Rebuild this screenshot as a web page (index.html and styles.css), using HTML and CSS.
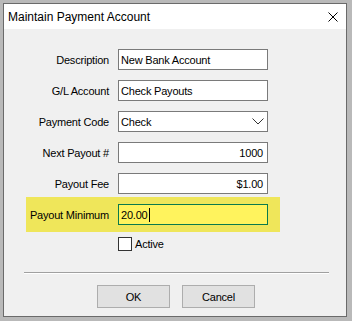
FILE: index.html
```html
<!DOCTYPE html>
<html>
<head>
<meta charset="utf-8">
<link rel="stylesheet" href="styles.css">
</head>
<body>
<div class="window">
  <div class="titlebar">
    <span class="title">Maintain Payment Account</span>
    <svg class="close" width="10" height="10" viewBox="0 0 10 10">
      <path d="M0.5 0.5 L9.5 9.5 M9.5 0.5 L0.5 9.5" stroke="#000" stroke-width="1" fill="none"/>
    </svg>
  </div>
  <div class="body">
    <div class="form">
      <div class="row">
        <label class="lbl">Description</label>
        <div class="field">New Bank Account</div>
      </div>
      <div class="row">
        <label class="lbl">G/L Account</label>
        <div class="field">Check Payouts</div>
      </div>
      <div class="row">
        <label class="lbl">Payment Code</label>
        <div class="field select">
          <span>Check</span>
          <svg class="chev" width="12" height="7" viewBox="0 0 12 7">
            <path d="M0.5 0.5 L6 6 L11.5 0.5" stroke="#333" stroke-width="1" fill="none"/>
          </svg>
        </div>
      </div>
      <div class="row">
        <label class="lbl">Next Payout #</label>
        <div class="field num">1000</div>
      </div>
      <div class="row">
        <label class="lbl">Payout Fee</label>
        <div class="field num">$1.00</div>
      </div>
      <div class="row hl">
        <label class="lbl">Payout Minimum</label>
        <div class="field focus">20.00<span class="caret"></span></div>
      </div>
      <div class="check-row">
        <span class="box"></span>
        <span class="check-label">Active</span>
      </div>
    </div>
    <div class="sep"></div>
    <div class="buttons">
      <button class="btn">OK</button>
      <button class="btn">Cancel</button>
    </div>
  </div>
</div>
</body>
</html>
```
FILE: styles.css
```css
* { box-sizing: border-box; }
html, body { margin: 0; padding: 0; }
body {
  width: 352px;
  height: 321px;
  background: #b9b9b9;
  padding: 3px 0 0 3px;
  font-family: "Liberation Sans", Arial, sans-serif;
  font-size: 11px;
  color: #000;
  overflow: hidden;
}
.window {
  width: 344px;
  height: 314px;
  border: 1px solid #6a6a6a;
  background: #f0f0f0;
  display: flex;
  flex-direction: column;
}
.titlebar {
  height: 25px;
  background: #fff;
  display: flex;
  align-items: center;
  justify-content: space-between;
  padding: 0 8px 0 4px;
}
.title {
  font-size: 12px;
  padding-top: 1px;
}
.close { display: block; margin-top: 1px; }
.body {
  flex: 1;
  padding-top: 20px;
}
.form {
  display: flex;
  flex-direction: column;
  gap: 10px;
}
.row {
  display: grid;
  grid-template-columns: 105px 150px;
  column-gap: 9px;
  align-items: center;
}
.lbl {
  text-align: right;
  letter-spacing: -0.2px;
}
.field {
  height: 21px;
  border: 1px solid #7a7a7a;
  background: #fff;
  padding: 0 4px 0 2px;
  display: flex;
  align-items: center;
  white-space: nowrap;
  letter-spacing: -0.2px;
}
.field.num { justify-content: flex-end; }
.field.select { justify-content: space-between; padding-right: 3px; }
.chev { display: block; }
.row.hl {
  margin: -7px 0 -7px 22px;
  padding: 7px 12px 7px 0;
  grid-template-columns: 83px 150px;
  width: fit-content;
  background: #efe65a;
}
.field.focus {
  background: #fff35d;
  border-color: #0a7a4c;
}
.caret {
  display: inline-block;
  width: 1px;
  height: 14px;
  background: #000;
  margin-left: 1px;
}
.check-row {
  display: flex;
  align-items: center;
  height: 17px;
  padding-left: 114px;
  gap: 3px;
}
.box {
  width: 14px;
  height: 14px;
  border: 1px solid #333;
  background: #fff;
}
.check-label { letter-spacing: -0.2px; }
.sep {
  margin: 20px 0 0 20px;
  width: 305px;
  height: 2px;
  border-top: 1px solid #a0a0a0;
  border-bottom: 1px solid #fff;
}
.buttons {
  display: flex;
  gap: 12px;
  padding-left: 93px;
  margin-top: 11px;
}
.btn {
  width: 73px;
  height: 23px;
  border: 1px solid #adadad;
  background: #e1e1e1;
  font-family: "Liberation Sans", Arial, sans-serif;
  font-size: 11px;
  color: #000;
  padding: 0;
  letter-spacing: -0.2px;
}
```
